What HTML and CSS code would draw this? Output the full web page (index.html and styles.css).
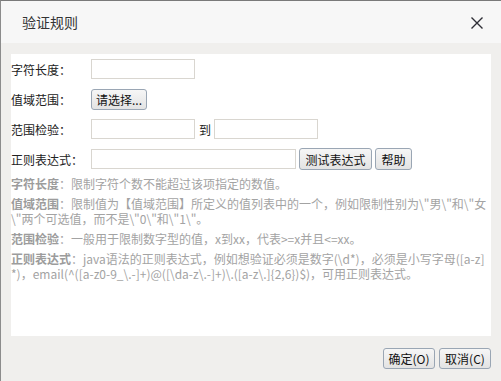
FILE: index.html
```html
<!DOCTYPE html>
<html lang="zh">
<head>
<meta charset="utf-8">
<title>验证规则</title>
<link rel="stylesheet" href="styles.css">
</head>
<body>
<div class="dialog">
  <div class="titlebar">
    <span class="title">验证规则</span>
    <span class="close" aria-label="关闭">
      <svg width="14" height="14" viewBox="0 0 14 14"><path d="M1.5 1.5 L12.5 12.5 M12.5 1.5 L1.5 12.5" stroke="#2e2e36" stroke-width="1.4" fill="none"/></svg>
    </span>
  </div>
  <div class="body">
    <div class="panel">
      <div class="row">
        <label class="label">字符长度：</label>
        <input class="field" type="text">
      </div>
      <div class="row">
        <label class="label">值域范围：</label>
        <button class="btn btn-pick">请选择...</button>
      </div>
      <div class="row">
        <label class="label">范围检验：</label>
        <input class="field" type="text">
        <span class="to">到</span>
        <input class="field" type="text">
      </div>
      <div class="row">
        <label class="label">正则表达式：</label>
        <input class="field wide" type="text">
        <button class="btn btn-test">测试表达式</button>
        <button class="btn btn-help">帮助</button>
      </div>
      <div class="notes">
        <p><b>字符长度</b>：限制字符个数不能超过该项指定的数值。</p>
        <p><b>值域范围</b>：限制值为【值域范围】所定义的值列表中的一个，例如限制性别为\"男\"和\"女<br>\"两个可选值，而不是\"0\"和\"1\"。</p>
        <p><b>范围检验</b>：一般用于限制数字型的值，x到xx，代表&gt;=x并且&lt;=xx。</p>
        <p><b>正则表达式</b>：java语法的正则表达式，例如想验证必须是数字(\d*)，必须是小写字母([a-z]<br>*)，email(^([a-z0-9_\.-]+)@([\da-z\.-]+)\.([a-z\.]{2,6})$)，可用正则表达式。</p>
      </div>
    </div>
    <div class="footer">
      <button class="btn btn-foot">确定(O)</button>
      <button class="btn btn-foot">取消(C)</button>
    </div>
  </div>
</div>
</body>
</html>
```
FILE: styles.css
```css
html, body {
  margin: 0;
  padding: 0;
  background: #f0efed;
}
body {
  font-family: "Noto Sans CJK SC", "Noto Sans", sans-serif;
  font-size: 12px;
  color: #222;
}
.dialog {
  width: 501px;
  height: 381px;
  box-sizing: border-box;
  border-left: 1px solid #8c8c8c;
  border-top: 1px solid #7a7a7a;
  display: flex;
  flex-direction: column;
  background: #f0efed;
}
.titlebar {
  height: 42px;
  background: #f7f7f7;
  display: flex;
  align-items: center;
  justify-content: space-between;
  padding: 0 17px 0 21px;
  flex-shrink: 0;
}
.title {
  font-size: 14px;
  color: #333;
}
.close {
  display: flex;
  width: 14px;
  height: 14px;
  margin-top: 1px;
}
.body {
  flex: 1;
  padding: 11px 10px 0 10px;
  display: flex;
  flex-direction: column;
}
.panel {
  background: #fff;
  height: 282px;
  box-sizing: border-box;
}
.row {
  height: 30px;
  display: flex;
  align-items: center;
}
.label {
  width: 80px;
  flex-shrink: 0;
  color: #222;
}
.field {
  width: 104px;
  height: 20px;
  box-sizing: border-box;
  border: 1px solid #d9d6d0;
  margin: 0;
  padding: 0 3px;
  font: inherit;
  background: #fff;
}
.field.wide {
  width: 205px;
}
.to {
  margin: 0 3px 0 4px;
}
.btn {
  font: inherit;
  font-size: 12px;
  color: #111;
  height: 21px;
  box-sizing: border-box;
  padding: 0;
  margin: 0;
  border: 1px solid #9aa6b4;
  border-radius: 3px;
  background: linear-gradient(#f6f6f6, #e3e3e3);
  line-height: 19px;
  white-space: nowrap;
  text-align: center;
}
.btn-pick {
  width: 56px;
}
.btn-test {
  margin-left: 3px;
  width: 73px;
  height: 22px;
}
.btn-help {
  margin-left: 3px;
  width: 37px;
  height: 22px;
}
.notes {
  padding-top: 2px;
  color: #a3a3a3;
}
.notes p {
  margin: 0 0 5px 0;
  line-height: 15px;
}
.notes b {
  font-weight: bold;
  color: #9c9c9c;
}
.footer {
  flex: 1;
  display: flex;
  justify-content: flex-end;
  align-items: center;
  gap: 4px;
  padding-bottom: 1px;
}
.btn-foot {
  width: 52px;
}
```
